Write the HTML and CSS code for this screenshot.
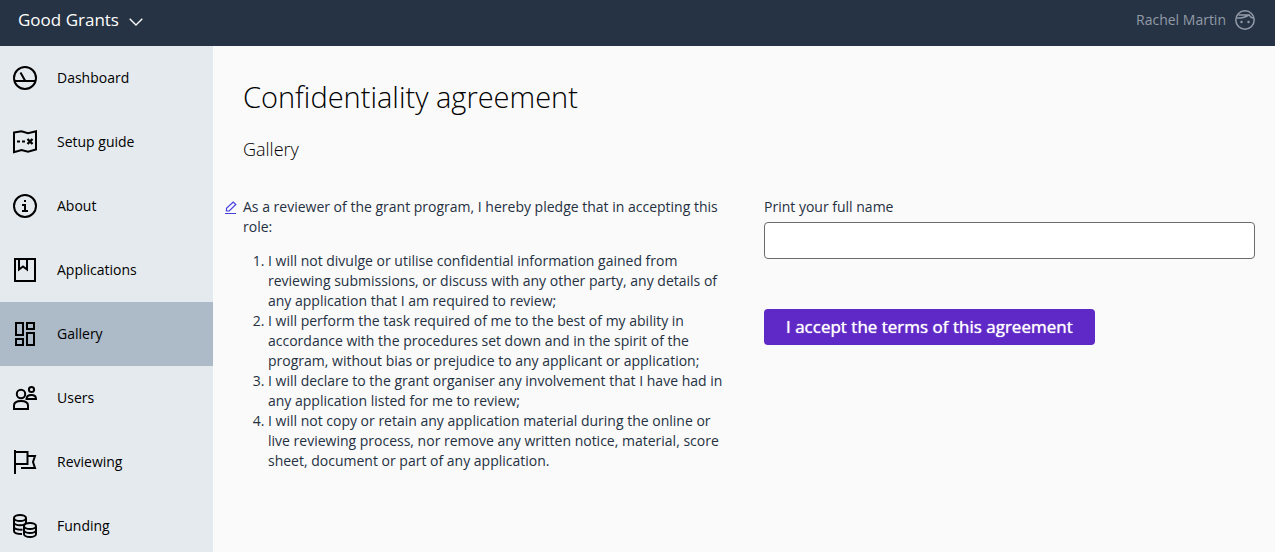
FILE: index.html
```html
<!DOCTYPE html>
<html lang="en">
<head>
<meta charset="utf-8">
<meta name="viewport" content="width=device-width, initial-scale=1">
<title>Confidentiality agreement - Good Grants</title>
<link rel="stylesheet" href="styles.css">
</head>
<body>
<div class="app">
  <header class="topbar">
    <button class="account-switch" type="button">Good Grants
      <svg class="chevron" viewBox="0 0 14 8" aria-hidden="true"><path d="M.7.7 7 7 13.300.7"/></svg>
    </button>
    <a class="profile" href="#">Rachel Martin
      <svg class="avatar" viewBox="0 0 20 20" aria-hidden="true"><circle cx="10" cy="10" r="9.200"/><path d="M1.200 8C6 8.300 10.500 7.300 14 4.800c1 1.800 2.500 2.800 4.800 3.400M3.500 5c3 .2 6.500-.2 10.500-.2"/><circle class="dot" cx="6.500" cy="12" r="1.200"/><circle class="dot" cx="13.500" cy="12" r="1.200"/></svg>
    </a>
  </header>
  <div class="body">
    <nav class="sidebar" aria-label="Main">
      <a class="nav-item" href="#"><svg class="icon" viewBox="0 0 24 24" aria-hidden="true"><circle cx="12" cy="12" r="11"/><path d="M1.500 15h21M12 14.500 7.500 6.500"/></svg>Dashboard</a>
      <a class="nav-item" href="#"><svg class="icon" viewBox="0 0 24 24" aria-hidden="true"><path d="M1 2.500 8.500 1.200 15 3.200l8-2v18.300l-8 2.200-6.500-1.700L1 22.200z"/><path d="M4 11.500h3M9 11.500h3"/><path class="heavy" d="M14.500 9l5 5M19.500 9l-5 5"/></svg>Setup guide</a>
      <a class="nav-item" href="#"><svg class="icon" viewBox="0 0 24 24" aria-hidden="true"><circle cx="12" cy="12" r="11"/><path d="M9 11h3v6M9 17h6M11 7h2"/></svg>About</a>
      <a class="nav-item" href="#"><svg class="icon" viewBox="0 0 24 24" aria-hidden="true"><path d="M2 1h20v22H2zM6 1v10.500l4-3 4 3V1"/></svg>Applications</a>
      <a class="nav-item active" href="#" aria-current="page"><svg class="icon" viewBox="0 0 24 24" aria-hidden="true"><path d="M3 1h7v12H3zM14 1h7v6h-7zM3 17h7v6H3zM14 11h7v12h-7z"/></svg>Gallery</a>
      <a class="nav-item" href="#"><svg class="icon" viewBox="0 0 24 24" aria-hidden="true"><circle cx="8" cy="8" r="4.200"/><path d="M1 23v-3.500C1 16.500 3.500 15 8 15s7 1.500 7 4.500V23z"/><circle cx="18.500" cy="3.500" r="2.600"/><path d="M13.500 13c0-2.500 1.500-4 5-4s4.500 1.500 4.500 4z"/></svg>Users</a>
      <a class="nav-item" href="#"><svg class="icon" viewBox="0 0 24 24" aria-hidden="true"><path d="M2 0v24M2 2h12.500v12H2M14.500 6H22l-2 6 2 6H8"/></svg>Reviewing</a>
      <a class="nav-item" href="#"><svg class="icon" viewBox="0 0 24 24" aria-hidden="true"><ellipse cx="7" cy="4" rx="6" ry="3"/><path d="M1 4v13c0 1.800 3 3 8 3M13 4v5M1 8.300c0 1.700 2.700 3 6 3s6-1.300 6-3M1 12.700c0 1.700 3 3 8.500 3"/><ellipse cx="17" cy="12" rx="6" ry="3"/><path d="M11 12v8c0 1.700 2.700 3 6 3s6-1.300 6-3v-8M11 16c0 1.700 2.700 3 6 3s6-1.300 6-3"/></svg>Funding</a>
    </nav>
    <main class="content">
      <h1 class="title">Confidentiality agreement</h1>
      <h2 class="subtitle">Gallery</h2>
      <div class="columns">
        <section class="agreement">
          <a class="edit" href="#" aria-label="Edit agreement"><svg class="pencil" viewBox="0 0 12 14" aria-hidden="true"><path d="M1.500 10V7.300L8.200 1l2.600 2.500L4.200 10zM0 12.500h11"/></svg></a>
          <p class="intro">As a reviewer of the grant program, I hereby pledge that in accepting this role:</p>
          <ol class="terms">
            <li>I will not divulge or utilise confidential information gained from reviewing submissions, or discuss with any other party, any details of any application that I am required to review;</li>
            <li>I will perform the task required of me to the best of my ability in accordance with the procedures set down and in the spirit of the program, without bias or prejudice to any applicant or application;</li>
            <li>I will declare to the grant organiser any involvement that I have had in any application listed for me to review;</li>
            <li>I will not copy or retain any application material during the online or live reviewing process, nor remove any written notice, material, score sheet, document or part of any application.</li>
          </ol>
        </section>
        <form class="accept">
          <label class="label" for="full-name">Print your full name</label>
          <input class="field" id="full-name" name="full-name" type="text">
          <button class="submit" type="submit">I accept the terms of this agreement</button>
        </form>
      </div>
    </main>
  </div>
</div>
</body>
</html>
```
FILE: styles.css
```css
* {
  box-sizing: border-box;
}

body {
  margin: 0;
  background: #fafafa;
  color: #253142;
  font: 14px/20px "Open Sans", "Noto Sans", sans-serif;
}

svg {
  fill: none;
  stroke: currentColor;
  flex: none;
}

.app {
  display: flex;
  flex-direction: column;
  height: 100vh;
}

.topbar {
  display: flex;
  flex: none;
  align-items: center;
  justify-content: space-between;
  padding: 8px 20px 14px 18px;
  background: #263344;
}

.account-switch {
  display: flex;
  align-items: center;
  gap: 10px;
  padding: 0;
  border: 0;
  background: none;
  color: #fff;
  font: inherit;
  font-size: 17px;
  line-height: 24px;
}

.chevron {
  width: 14px;
  height: 8px;
  margin-top: 4px;
  stroke-width: 1.3;
}

.profile {
  display: flex;
  align-items: center;
  gap: 9px;
  color: #929aa7;
  text-decoration: none;
}

.avatar {
  width: 20px;
  height: 20px;
  stroke-width: 1.5;
}

.dot {
  fill: currentColor;
  stroke: none;
}

.body {
  display: flex;
  flex: 1;
  min-height: 0;
}

.sidebar {
  flex: none;
  width: 213px;
  overflow-y: auto;
  scrollbar-width: none;
  background: #e5eaee;
}

.nav-item {
  display: flex;
  align-items: center;
  gap: 20px;
  height: 64px;
  padding: 0 13px;
  color: #000;
  text-decoration: none;
}

.nav-item.active {
  background: #adbac7;
}

.icon {
  width: 24px;
  height: 24px;
  stroke-width: 2;
  overflow: visible;
}

.heavy {
  stroke-width: 2.4;
}

.content {
  flex: 1;
  min-width: 0;
  overflow-y: auto;
  padding: 30px 20px 30px 30px;
}

.title {
  margin: 0 0 19px;
  color: #000;
  font-size: 29px;
  font-weight: 300;
  line-height: 42px;
}

.subtitle {
  margin: 0 0 36px;
  color: #000;
  font-size: 18px;
  font-weight: 300;
  line-height: 24px;
}

.columns {
  display: grid;
  grid-template-columns: 1fr 1fr;
  gap: 30px;
}

.agreement {
  position: relative;
}

.edit {
  position: absolute;
  top: 4px;
  left: -18px;
  color: #4540e0;
}

.pencil {
  display: block;
  width: 12px;
  height: 14px;
  stroke-width: 1.2;
}

.intro {
  margin: 0 0 14px;
}

.terms {
  margin: 0;
  padding-left: 25px;
}

.accept {
  display: flex;
  flex-direction: column;
  align-items: flex-start;
}

.label {
  margin-bottom: 5px;
}

.field {
  width: 100%;
  height: 37px;
  margin-bottom: 50px;
  padding: 0 12px;
  border: 1px solid #6b6b6b;
  border-radius: 4px;
  background: #fff;
  font: inherit;
}

.submit {
  padding: 6px 22px;
  border: 0;
  border-radius: 4px;
  background: #5f29c7;
  color: #fff;
  font: inherit;
  font-size: 17px;
  line-height: 24px;
  text-shadow: 0 0 1px #fff;
}
```
